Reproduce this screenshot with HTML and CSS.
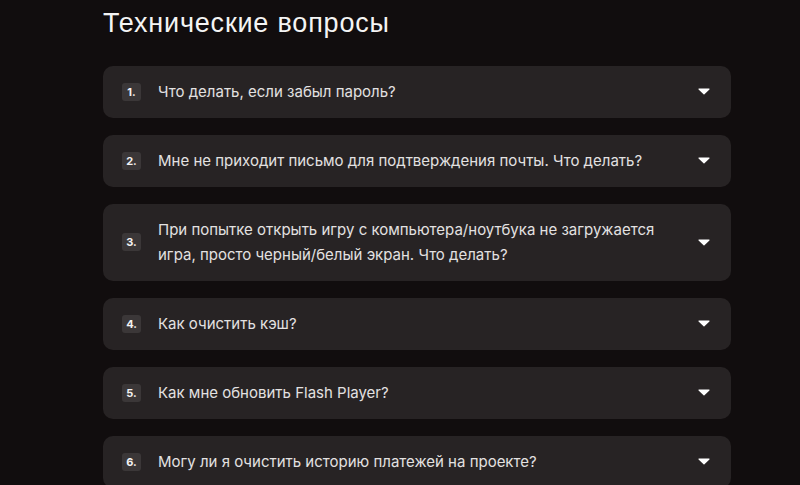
FILE: index.html
```html
<!DOCTYPE html>
<html lang="ru">
<head>
<meta charset="utf-8">
<link rel="stylesheet" href="styles.css">
</head>
<body>
<main class="faq">
  <h2 class="faq-title">Технические вопросы</h2>
  <div class="faq-list">
    <div class="faq-item"><span class="num">1.</span><span class="q">Что делать, если забыл пароль?</span><svg class="arrow" viewBox="0 0 12 7"><path d="M1 0.5h10a0.6 0.6 0 0 1 0.45 1L6.45 6.3a0.6 0.6 0 0 1-0.9 0L0.55 1.5A0.6 0.6 0 0 1 1 0.5z"/></svg></div>
    <div class="faq-item"><span class="num">2.</span><span class="q">Мне не приходит письмо для подтверждения почты. Что делать?</span><svg class="arrow" viewBox="0 0 12 7"><path d="M1 0.5h10a0.6 0.6 0 0 1 0.45 1L6.45 6.3a0.6 0.6 0 0 1-0.9 0L0.55 1.5A0.6 0.6 0 0 1 1 0.5z"/></svg></div>
    <div class="faq-item"><span class="num">3.</span><span class="q">При попытке открыть игру с компьютера/ноутбука не загружается игра, просто черный/белый экран. Что делать?</span><svg class="arrow" viewBox="0 0 12 7"><path d="M1 0.5h10a0.6 0.6 0 0 1 0.45 1L6.45 6.3a0.6 0.6 0 0 1-0.9 0L0.55 1.5A0.6 0.6 0 0 1 1 0.5z"/></svg></div>
    <div class="faq-item"><span class="num">4.</span><span class="q">Как очистить кэш?</span><svg class="arrow" viewBox="0 0 12 7"><path d="M1 0.5h10a0.6 0.6 0 0 1 0.45 1L6.45 6.3a0.6 0.6 0 0 1-0.9 0L0.55 1.5A0.6 0.6 0 0 1 1 0.5z"/></svg></div>
    <div class="faq-item"><span class="num">5.</span><span class="q">Как мне обновить Flash Player?</span><svg class="arrow" viewBox="0 0 12 7"><path d="M1 0.5h10a0.6 0.6 0 0 1 0.45 1L6.45 6.3a0.6 0.6 0 0 1-0.9 0L0.55 1.5A0.6 0.6 0 0 1 1 0.5z"/></svg></div>
    <div class="faq-item"><span class="num">6.</span><span class="q">Могу ли я очистить историю платежей на проекте?</span><svg class="arrow" viewBox="0 0 12 7"><path d="M1 0.5h10a0.6 0.6 0 0 1 0.45 1L6.45 6.3a0.6 0.6 0 0 1-0.9 0L0.55 1.5A0.6 0.6 0 0 1 1 0.5z"/></svg></div>
  </div>
</main>
</body>
</html>
```
FILE: styles.css
```css
html, body {
  margin: 0;
  padding: 0;
  background: #110d0e;
  overflow: hidden;
}
body {
  font-family: Inter, "Noto Sans", sans-serif;
  color: #e6e4e4;
}
.faq {
  width: 628px;
  margin-left: 103px;
  padding-top: 4px;
}
.faq-title {
  margin: 0 0 24px 0;
  font-family: "Liberation Sans", Arial, sans-serif;
  font-weight: 400;
  font-size: 27px;
  letter-spacing: 0.8px;
  line-height: 38px;
  color: #f4f4f4;
}
.faq-list {
  display: flex;
  flex-direction: column;
  gap: 17px;
}
.faq-item {
  display: flex;
  align-items: center;
  background: #272324;
  border-radius: 10px;
  padding: 13px 21px 14px 19px;
  min-height: 25px;
}
.num {
  flex: none;
  width: 19px;
  height: 18px;
  border-radius: 3px;
  background: #3b3738;
  color: #f4f2f2;
  font-size: 11px;
  font-weight: 700;
  line-height: 18px;
  text-align: center;
  margin-right: 17px;
}
.q {
  flex: 1;
  font-size: 15px;
  line-height: 25px;
  color: #e3e1e1;
  padding-right: 28px;
}
.arrow {
  flex: none;
  width: 12px;
  height: 7px;
  fill: #ffffff;
}
```
